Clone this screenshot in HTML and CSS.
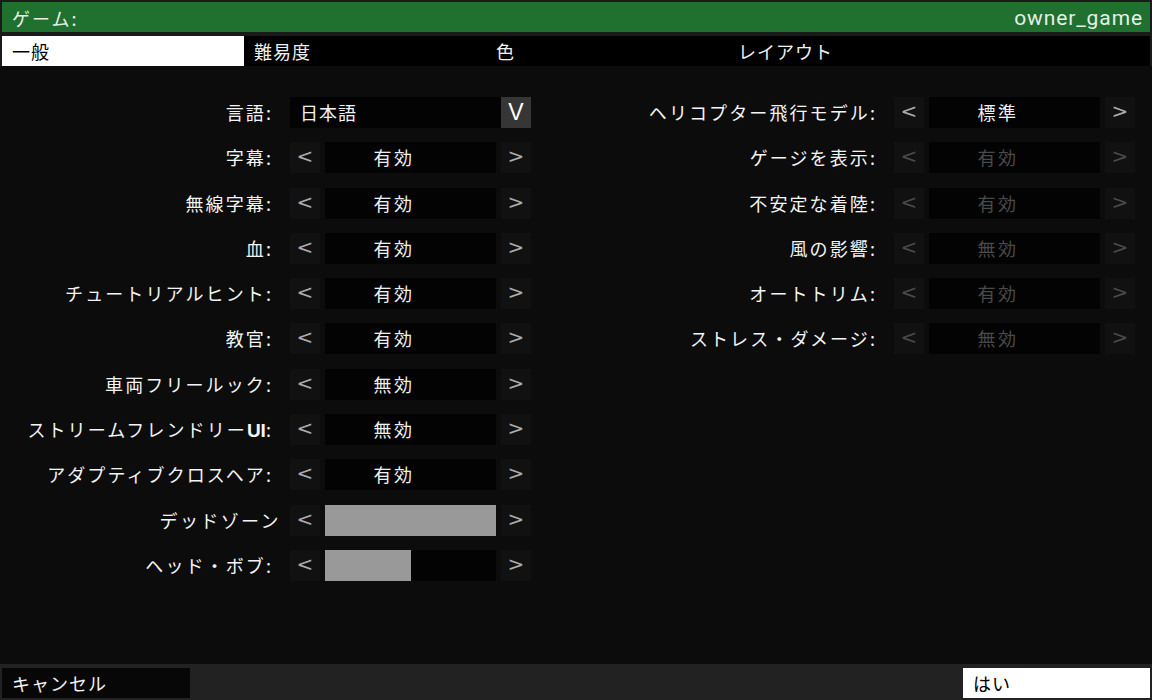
FILE: index.html
```html
<!DOCTYPE html>
<html lang="ja">
<head>
<meta charset="utf-8">
<title>ゲーム</title>
<link rel="stylesheet" href="styles.css">
</head>
<body>
<div class="screen">
  <header class="top">
    <span class="top-title">ゲーム:</span>
    <span class="top-user">owner_game</span>
  </header>
  <nav class="tabs">
    <div class="tab active">一般</div>
    <div class="tab">難易度</div>
    <div class="tab">色</div>
    <div class="tab">レイアウト</div>
  </nav>
  <main class="panel">
    <section class="col">
      <div class="row">
        <div class="label">言語:</div>
        <div class="dropdown"><span class="dd-value">日本語</span><span class="dd-btn">V</span></div>
      </div>
      <div class="row">
        <div class="label">字幕:</div>
        <div class="ctrl"><span class="arrow">&lt;</span><span class="value">有効</span><span class="arrow">&gt;</span></div>
      </div>
      <div class="row">
        <div class="label">無線字幕:</div>
        <div class="ctrl"><span class="arrow">&lt;</span><span class="value">有効</span><span class="arrow">&gt;</span></div>
      </div>
      <div class="row">
        <div class="label">血:</div>
        <div class="ctrl"><span class="arrow">&lt;</span><span class="value">有効</span><span class="arrow">&gt;</span></div>
      </div>
      <div class="row">
        <div class="label">チュートリアルヒント:</div>
        <div class="ctrl"><span class="arrow">&lt;</span><span class="value">有効</span><span class="arrow">&gt;</span></div>
      </div>
      <div class="row">
        <div class="label">教官:</div>
        <div class="ctrl"><span class="arrow">&lt;</span><span class="value">有効</span><span class="arrow">&gt;</span></div>
      </div>
      <div class="row">
        <div class="label">車両フリールック:</div>
        <div class="ctrl"><span class="arrow">&lt;</span><span class="value">無効</span><span class="arrow">&gt;</span></div>
      </div>
      <div class="row">
        <div class="label">ストリームフレンドリー<span class="latin">UI</span>:</div>
        <div class="ctrl"><span class="arrow">&lt;</span><span class="value">無効</span><span class="arrow">&gt;</span></div>
      </div>
      <div class="row">
        <div class="label">アダプティブクロスヘア:</div>
        <div class="ctrl"><span class="arrow">&lt;</span><span class="value">有効</span><span class="arrow">&gt;</span></div>
      </div>
      <div class="row">
        <div class="label bare">デッドゾーン</div>
        <div class="ctrl"><span class="arrow">&lt;</span><span class="value slider"><span class="fill" style="width:100%"></span></span><span class="arrow">&gt;</span></div>
      </div>
      <div class="row">
        <div class="label">ヘッド・ボブ:</div>
        <div class="ctrl"><span class="arrow">&lt;</span><span class="value slider"><span class="fill" style="width:50%"></span></span><span class="arrow">&gt;</span></div>
      </div>
    </section>
    <section class="col right">
      <div class="row">
        <div class="label">ヘリコプター飛行モデル:</div>
        <div class="ctrl"><span class="arrow">&lt;</span><span class="value">標準</span><span class="arrow">&gt;</span></div>
      </div>
      <div class="row">
        <div class="label">ゲージを表示:</div>
        <div class="ctrl disabled"><span class="arrow">&lt;</span><span class="value">有効</span><span class="arrow">&gt;</span></div>
      </div>
      <div class="row">
        <div class="label">不安定な着陸:</div>
        <div class="ctrl disabled"><span class="arrow">&lt;</span><span class="value">有効</span><span class="arrow">&gt;</span></div>
      </div>
      <div class="row">
        <div class="label">風の影響:</div>
        <div class="ctrl disabled"><span class="arrow">&lt;</span><span class="value">無効</span><span class="arrow">&gt;</span></div>
      </div>
      <div class="row">
        <div class="label">オートトリム:</div>
        <div class="ctrl disabled"><span class="arrow">&lt;</span><span class="value">有効</span><span class="arrow">&gt;</span></div>
      </div>
      <div class="row">
        <div class="label">ストレス・ダメージ:</div>
        <div class="ctrl disabled"><span class="arrow">&lt;</span><span class="value">無効</span><span class="arrow">&gt;</span></div>
      </div>
    </section>
  </main>
  <footer class="foot">
    <div class="btn cancel">キャンセル</div>
    <div class="btn ok">はい</div>
  </footer>
</div>
</body>
</html>
```
FILE: styles.css
```css
* { box-sizing: border-box; }
html, body { margin: 0; padding: 0; }
body {
  width: 1152px;
  height: 700px;
  overflow: hidden;
  background: #1a1a1a;
  font-family: "Noto Sans CJK JP", "Noto Sans", sans-serif;
  color: #f2f2f2;
}
.screen { display: flex; flex-direction: column; height: 700px; }

.top {
  margin: 2px 2px 0 2px;
  height: 30px;
  background: #207030;
  display: flex;
  align-items: center;
  justify-content: space-between;
  padding: 2px 7px 0 10px;
  color: #e6efe6;
}
.top-title { font-size: 18px; line-height: 1; letter-spacing: 2px; }
.top-user { font-family: "Roboto", "Liberation Sans", sans-serif; font-size: 21px; letter-spacing: 0.9px; line-height: 1; }

.tabs {
  margin: 4px 2px 0 2px;
  height: 30px;
  background: #000;
  display: flex;
}
.tab {
  width: 242px;
  padding-left: 10px;
  font-size: 18px;
  line-height: 30px;
  letter-spacing: 1px;
  color: #f0f0f0;
}
.tab.active { background: #fff; color: #000; }

.panel {
  height: 598px;
  background: #0c0c0c;
  padding-top: 31px;
  display: flex;
  gap: 73px;
}
.col { display: flex; flex-direction: column; gap: 14.3px; }
.row { display: flex; align-items: center; height: 31px; gap: 9px; }
.label {
  width: 281px;
  text-align: right;
  padding-right: 8px;
  font-size: 18px;
  line-height: 31px;
  letter-spacing: 2.1px;
  white-space: nowrap;
  color: #f4f4f4;
}
.label.bare { padding-right: 0; letter-spacing: 2.4px; }
.latin { font-family: "Liberation Sans", sans-serif; font-weight: bold; font-size: 19px; letter-spacing: 0; }

.ctrl {
  display: grid;
  grid-template-columns: 30px 171px 30px;
  column-gap: 5px;
  height: 31px;
}
.arrow {
  background: #111;
  color: #ababab;
  font-family: "DejaVu Sans", sans-serif;
  font-size: 20px;
  line-height: 29px;
  text-align: center;
}
.value {
  background: #030303;
  font-size: 18px;
  line-height: 31px;
  text-align: center;
  padding-right: 33px;
  letter-spacing: 2.5px;
  color: #f0f0f0;
}
.value.slider { padding: 0; display: flex; }
.fill { display: block; height: 100%; background: #999; }
.disabled .arrow, .disabled .value { color: #4a4a4a; }

.dropdown {
  width: 241px;
  height: 31px;
  display: flex;
  background: #030303;
}
.dd-value { flex: 1; padding-left: 10px; font-size: 18px; line-height: 31px; letter-spacing: 1px; }
.dd-btn {
  width: 30px;
  background: #363636;
  color: #fff;
  font-family: "Liberation Sans", sans-serif;
  font-size: 23px;
  line-height: 31px;
  text-align: center;
}

.foot {
  height: 36px;
  background: #222;
  padding: 4px 2px 2px 2px;
  display: flex;
  justify-content: space-between;
}
.btn { height: 30px; font-size: 18px; line-height: 30px; padding-left: 10px; letter-spacing: 1px; }
.cancel { width: 188px; background: #070707; color: #f0f0f0; }
.ok { width: 187px; background: #fff; color: #000; }
```
